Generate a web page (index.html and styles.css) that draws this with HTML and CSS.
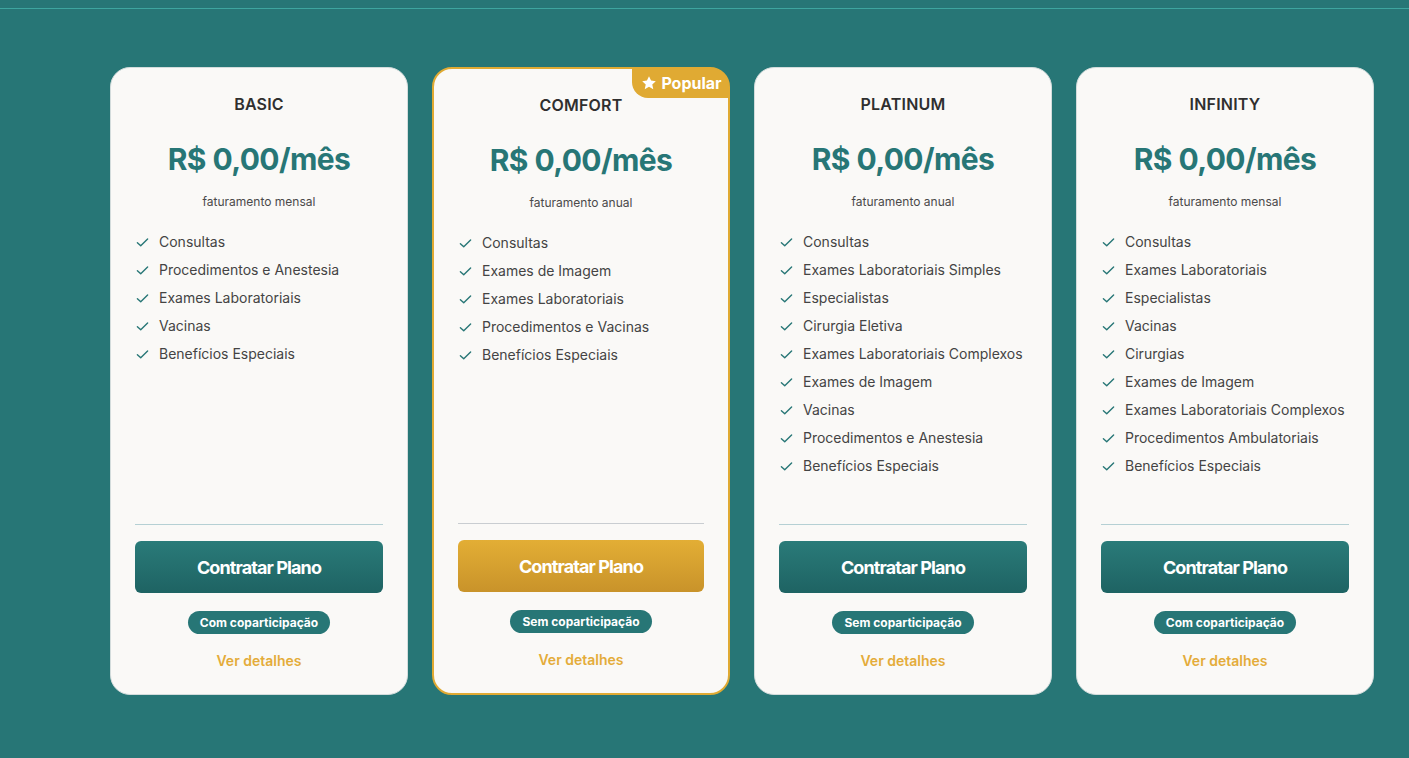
FILE: index.html
```html
<!DOCTYPE html>
<html lang="pt-BR">
<head>
<meta charset="utf-8">
<title>Planos</title>
<link rel="stylesheet" href="styles.css">
</head>
<body>
<div class="topbar"></div>
<main class="plans">
  <section class="card">
    <h3 class="name">BASIC</h3>
    <div class="price">R$ 0,00/mês</div>
    <div class="billing">faturamento mensal</div>
    <ul class="features">
      <li><svg class="chk" viewBox="0 0 14 14"><path d="M1.5 7.2l3.6 3.4L12.5 3.2"/></svg>Consultas</li>
      <li><svg class="chk" viewBox="0 0 14 14"><path d="M1.5 7.2l3.6 3.4L12.5 3.2"/></svg>Procedimentos e Anestesia</li>
      <li><svg class="chk" viewBox="0 0 14 14"><path d="M1.5 7.2l3.6 3.4L12.5 3.2"/></svg>Exames Laboratoriais</li>
      <li><svg class="chk" viewBox="0 0 14 14"><path d="M1.5 7.2l3.6 3.4L12.5 3.2"/></svg>Vacinas</li>
      <li><svg class="chk" viewBox="0 0 14 14"><path d="M1.5 7.2l3.6 3.4L12.5 3.2"/></svg>Benefícios Especiais</li>
    </ul>
    <div class="footer">
      <button class="cta">Contratar Plano</button>
      <span class="pill">Com coparticipação</span>
      <a class="details" href="#">Ver detalhes</a>
    </div>
  </section>

  <section class="card popular">
    <div class="ribbon"><svg class="star" viewBox="0 0 24 24"><path d="M12 1.8l3.1 6.6 7.1.8-5.3 4.9 1.5 7.1L12 17.6l-6.4 3.6 1.5-7.1-5.3-4.9 7.1-.8z"/></svg>Popular</div>
    <h3 class="name">COMFORT</h3>
    <div class="price">R$ 0,00/mês</div>
    <div class="billing">faturamento anual</div>
    <ul class="features">
      <li><svg class="chk" viewBox="0 0 14 14"><path d="M1.5 7.2l3.6 3.4L12.5 3.2"/></svg>Consultas</li>
      <li><svg class="chk" viewBox="0 0 14 14"><path d="M1.5 7.2l3.6 3.4L12.5 3.2"/></svg>Exames de Imagem</li>
      <li><svg class="chk" viewBox="0 0 14 14"><path d="M1.5 7.2l3.6 3.4L12.5 3.2"/></svg>Exames Laboratoriais</li>
      <li><svg class="chk" viewBox="0 0 14 14"><path d="M1.5 7.2l3.6 3.4L12.5 3.2"/></svg>Procedimentos e Vacinas</li>
      <li><svg class="chk" viewBox="0 0 14 14"><path d="M1.5 7.2l3.6 3.4L12.5 3.2"/></svg>Benefícios Especiais</li>
    </ul>
    <div class="footer">
      <button class="cta gold">Contratar Plano</button>
      <span class="pill">Sem coparticipação</span>
      <a class="details" href="#">Ver detalhes</a>
    </div>
  </section>

  <section class="card">
    <h3 class="name">PLATINUM</h3>
    <div class="price">R$ 0,00/mês</div>
    <div class="billing">faturamento anual</div>
    <ul class="features">
      <li><svg class="chk" viewBox="0 0 14 14"><path d="M1.5 7.2l3.6 3.4L12.5 3.2"/></svg>Consultas</li>
      <li><svg class="chk" viewBox="0 0 14 14"><path d="M1.5 7.2l3.6 3.4L12.5 3.2"/></svg>Exames Laboratoriais Simples</li>
      <li><svg class="chk" viewBox="0 0 14 14"><path d="M1.5 7.2l3.6 3.4L12.5 3.2"/></svg>Especialistas</li>
      <li><svg class="chk" viewBox="0 0 14 14"><path d="M1.5 7.2l3.6 3.4L12.5 3.2"/></svg>Cirurgia Eletiva</li>
      <li><svg class="chk" viewBox="0 0 14 14"><path d="M1.5 7.2l3.6 3.4L12.5 3.2"/></svg>Exames Laboratoriais Complexos</li>
      <li><svg class="chk" viewBox="0 0 14 14"><path d="M1.5 7.2l3.6 3.4L12.5 3.2"/></svg>Exames de Imagem</li>
      <li><svg class="chk" viewBox="0 0 14 14"><path d="M1.5 7.2l3.6 3.4L12.5 3.2"/></svg>Vacinas</li>
      <li><svg class="chk" viewBox="0 0 14 14"><path d="M1.5 7.2l3.6 3.4L12.5 3.2"/></svg>Procedimentos e Anestesia</li>
      <li><svg class="chk" viewBox="0 0 14 14"><path d="M1.5 7.2l3.6 3.4L12.5 3.2"/></svg>Benefícios Especiais</li>
    </ul>
    <div class="footer">
      <button class="cta">Contratar Plano</button>
      <span class="pill">Sem coparticipação</span>
      <a class="details" href="#">Ver detalhes</a>
    </div>
  </section>

  <section class="card">
    <h3 class="name">INFINITY</h3>
    <div class="price">R$ 0,00/mês</div>
    <div class="billing">faturamento mensal</div>
    <ul class="features">
      <li><svg class="chk" viewBox="0 0 14 14"><path d="M1.5 7.2l3.6 3.4L12.5 3.2"/></svg>Consultas</li>
      <li><svg class="chk" viewBox="0 0 14 14"><path d="M1.5 7.2l3.6 3.4L12.5 3.2"/></svg>Exames Laboratoriais</li>
      <li><svg class="chk" viewBox="0 0 14 14"><path d="M1.5 7.2l3.6 3.4L12.5 3.2"/></svg>Especialistas</li>
      <li><svg class="chk" viewBox="0 0 14 14"><path d="M1.5 7.2l3.6 3.4L12.5 3.2"/></svg>Vacinas</li>
      <li><svg class="chk" viewBox="0 0 14 14"><path d="M1.5 7.2l3.6 3.4L12.5 3.2"/></svg>Cirurgias</li>
      <li><svg class="chk" viewBox="0 0 14 14"><path d="M1.5 7.2l3.6 3.4L12.5 3.2"/></svg>Exames de Imagem</li>
      <li><svg class="chk" viewBox="0 0 14 14"><path d="M1.5 7.2l3.6 3.4L12.5 3.2"/></svg>Exames Laboratoriais Complexos</li>
      <li><svg class="chk" viewBox="0 0 14 14"><path d="M1.5 7.2l3.6 3.4L12.5 3.2"/></svg>Procedimentos Ambulatoriais</li>
      <li><svg class="chk" viewBox="0 0 14 14"><path d="M1.5 7.2l3.6 3.4L12.5 3.2"/></svg>Benefícios Especiais</li>
    </ul>
    <div class="footer">
      <button class="cta">Contratar Plano</button>
      <span class="pill">Com coparticipação</span>
      <a class="details" href="#">Ver detalhes</a>
    </div>
  </section>
</main>
</body>
</html>
```

FILE: styles.css
```css
* { box-sizing: border-box; }

html, body {
  margin: 0;
  padding: 0;
  height: 100%;
}

body {
  background: #277676;
  font-family: Inter, "Noto Sans", "Liberation Sans", sans-serif;
  color: #333;
  overflow: hidden;
}

.topbar {
  height: 9px;
  border-bottom: 1px solid #3ea59f;
}

.plans {
  display: flex;
  align-items: stretch;
  gap: 24px;
  padding: 58px 0 0 110px;
}

.card {
  position: relative;
  width: 298px;
  height: 628px;
  background: #faf9f7;
  border: 1px solid #d3dcdc;
  border-radius: 20px;
  padding: 24px 24px 23px;
  display: flex;
  flex-direction: column;
  align-items: stretch;
}

.card.popular {
  border: 2px solid #e0aa33;
  padding: 24px 24px 23px;
}

.ribbon {
  position: absolute;
  top: -1px;
  right: -1px;
  width: 97px;
  height: 30px;
  background: #e0aa33;
  color: #fff;
  border-radius: 0 19px 0 16px;
  display: flex;
  align-items: center;
  justify-content: center;
  gap: 4px;
  font-size: 16px;
  font-weight: 700;
  padding-left: 2px;
}

.star {
  width: 16px;
  height: 16px;
  fill: #fff;
}

.name {
  margin: 0;
  text-align: center;
  font-size: 16px;
  line-height: 24px;
  font-weight: 600;
  color: #2f2f2f;
  letter-spacing: 0.2px;
}

.price {
  margin-top: 24px;
  text-align: center;
  font-size: 30px;
  line-height: 38px;
  font-weight: 700;
  color: #277676;
  letter-spacing: -0.6px;
}

.billing {
  margin-top: 15px;
  text-align: center;
  font-size: 12px;
  line-height: 18px;
  color: #4a4a4a;
}

.features {
  list-style: none;
  margin: 21px 0 0;
  padding: 0 0 0 1px;
  display: flex;
  flex-direction: column;
  gap: 8px;
  flex: 1;
}

.features li {
  display: flex;
  align-items: center;
  gap: 10px;
  font-size: 14px;
  line-height: 20px;
  color: #444;
}

.chk {
  width: 13px;
  height: 13px;
  flex: none;
  fill: none;
  stroke: #277676;
  stroke-width: 1.5;
  stroke-linecap: round;
  stroke-linejoin: round;
}

.footer {
  border-top: 1px solid #b5d0d4;
  padding-top: 16px;
  display: flex;
  flex-direction: column;
  align-items: center;
}

.popular .footer { border-top-color: #c9cdd1; }

.cta {
  width: 100%;
  height: 52px;
  border: none;
  border-radius: 6px;
  background: linear-gradient(#2a7b79, #1e6363);
  color: #fff;
  font-family: inherit;
  font-size: 18px;
  font-weight: 700;
  letter-spacing: -0.9px;
  cursor: pointer;
}

.cta.gold {
  background: linear-gradient(#e3ae35, #c9932a);
}

.pill {
  margin-top: 18px;
  height: 23px;
  padding: 0 12px;
  border-radius: 12px;
  background: #277676;
  color: #fff;
  font-size: 12px;
  font-weight: 700;
  line-height: 23px;
}

.details {
  margin-top: 17px;
  font-size: 14px;
  line-height: 20px;
  font-weight: 600;
  color: #e4ac3a;
  text-decoration: none;
}
```
